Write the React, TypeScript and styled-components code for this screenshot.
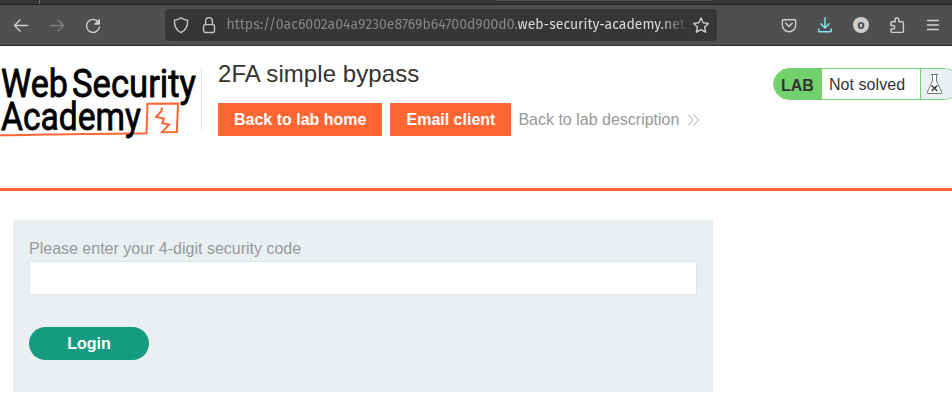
import React from "react";
import styled, { createGlobalStyle } from "styled-components";

const GlobalStyle = createGlobalStyle`
  *, *::before, *::after { box-sizing: border-box; }
  html, body { margin: 0; background: #fff; }
  body { font-family: "Liberation Sans", Arial, sans-serif; overflow: hidden; }
`;

const Page = styled.div`
  width: 952px;
  height: 418px;
  overflow: hidden;
  background: #fff;
  color: #333332;
`;

const TabStrip = styled.div`
  display: flex;
  height: 5px;
  background: #363636;
  border-bottom: 1px solid #232323;
`;

const TabDivider = styled.div`
  width: 1px;
  height: 4px;
  margin-left: 39px;
  background: #6a6a6a;
`;

const TabEdge = styled.div`
  width: 217px;
  height: 1px;
  margin-left: 456px;
  background: #505050;
`;

const Toolbar = styled.div`
  display: flex;
  align-items: center;
  height: 41px;
  padding-left: 9px;
  background: #4f4f4f;
  border-bottom: 1px solid #2b2b2b;
`;

const IconButton = styled.button<{ $color?: string; $gap?: number }>`
  display: flex;
  flex: none;
  width: 24px;
  height: 24px;
  padding: 0;
  border: 0;
  margin: 0 ${(p) => p.$gap ?? 12}px 0 0;
  background: none;
  color: ${(p) => p.$color ?? "#cfcfcf"};
`;

const Glyph = styled.svg`
  display: block;
  width: 24px;
  height: 24px;
  fill: none;
  stroke: currentColor;
  stroke-width: 1.4;
  stroke-linecap: round;
  stroke-linejoin: round;
`;

const AddressBar = styled.div`
  display: flex;
  align-items: center;
  flex: none;
  width: 552px;
  height: 32px;
  margin: 0 60px 0 48px;
  padding-left: 4px;
  border-radius: 4px;
  background: #363636;
`;

const Url = styled.div`
  flex: none;
  width: 462px;
  margin-left: 5.5px;
  margin-right: 0.5px;
  white-space: nowrap;
  font: 14px/22px "Fira Sans", "Noto Sans", sans-serif;
  color: #868686;
  mask-image: linear-gradient(to right, #000 432px, transparent 462px);
`;

const Domain = styled.span`
  color: #dadada;
`;

const Header = styled.header`
  display: flex;
  height: 145px;
  padding-top: 10px;
  border-bottom: 3px solid #ff6633;
`;

const Logo = styled.svg`
  display: block;
  flex: none;
  width: 201px;
  height: 90px;
  overflow: visible;
`;

const HeaderBody = styled.div`
  height: 62px;
  margin-top: 12px;
  padding-left: 16px;
  border-left: 1px solid #e2e4e5;
`;

const Title = styled.h2`
  margin: -10px 0 14px;
  font-size: 24px;
  line-height: 31px;
  font-weight: 400;
  letter-spacing: 0.07px;
`;

const Actions = styled.div`
  display: flex;
  align-items: center;
  gap: 8px;
`;

const OrangeButton = styled.a`
  height: 33px;
  padding: 0 16px;
  background: #ff6633;
  color: #fff;
  font-size: 16px;
  line-height: 33px;
  font-weight: 700;
  white-space: nowrap;
`;

const DescriptionLink = styled.a`
  display: flex;
  align-items: center;
  gap: 8px;
  margin-left: -1px;
  color: #999;
  font-size: 16px;
  line-height: 33px;
  white-space: nowrap;
`;

const Chevrons = styled.svg`
  width: 14px;
  height: 14px;
  fill: none;
  stroke: #999;
  stroke-width: 0.9;
`;

const Status = styled.div`
  display: flex;
  flex: none;
  width: 187px;
  height: 32px;
  margin: 12px -8px 0 auto;
  border: 1px solid #70d16d;
  border-radius: 16px;
  overflow: hidden;
  font-size: 16px;
  line-height: 32px;
`;

const LabTag = styled.span`
  width: 48px;
  padding-left: 7px;
  background: #70d16d;
  font-weight: 700;
  line-height: 34px;
`;

const StatusText = styled.span`
  width: 98px;
  padding-left: 7px;
  letter-spacing: 0.05px;
  white-space: nowrap;
`;

const FlaskCell = styled.span`
  flex: 1;
  padding: 3px 0 0 4px;
  border-left: 1px solid #70d16d;
  background: #eaeff2;
`;

const Flask = styled.svg`
  display: block;
  width: 20px;
  height: 24px;
  fill: none;
`;

const LoginForm = styled.form`
  width: 700px;
  height: 172px;
  margin: 29px 0 0 13px;
  padding: 18px 16px 0;
  background: #eaeff2;
`;

const Label = styled.label`
  display: block;
  height: 23px;
  color: #999;
  font-size: 16px;
  line-height: 21px;
`;

const CodeInput = styled.input`
  display: block;
  width: 668px;
  height: 34px;
  border: 1px solid #e1e3e4;
  border-radius: 0;
  background: #fff;
  outline: 0;
`;

const LoginButton = styled.button`
  display: block;
  width: 120px;
  height: 33px;
  margin-top: 32px;
  padding: 0;
  border: 0;
  border-radius: 17px;
  background: #159b80;
  color: #fff;
  font: 700 16px/33px "Liberation Sans", Arial, sans-serif;
`;

const BadgeText = styled.text`
  font: 700 12px "Noto Sans", sans-serif;
  fill: #4a4a4a;
  stroke: none;
`;

const LogoText = styled.text`
  font: 400 38.5px Roboto, sans-serif;
  fill: #000;
  stroke: #000;
  stroke-width: 0.8;
`;

export default function App() {
  return (
    <Page>
      <GlobalStyle />
      <TabStrip>
        <TabDivider />
        <TabEdge />
      </TabStrip>
      <Toolbar>
        <IconButton aria-label="Back">
          <Glyph viewBox="0 0 24 24"><path d="M18.500 12.500H5.600M11 7l-5.500 5.500L11 18" /></Glyph>
        </IconButton>
        <IconButton aria-label="Forward" $color="#7f7f7f">
          <Glyph viewBox="0 0 24 24"><path d="M5.500 12.500h12.900M13 7l5.500 5.500L13 18" /></Glyph>
        </IconButton>
        <IconButton aria-label="Reload">
          <Glyph viewBox="0 0 24 24">
            <path d="M17 8.600A6.500 6.500 0 1 0 18.500 14" />
            <path d="M18.500 6.500v4.700h-4.700z" fill="currentColor" strokeWidth="1" />
          </Glyph>
        </IconButton>
        <AddressBar>
          <IconButton aria-label="Tracking protection" $gap={4} $color="#c4c4c4">
            <Glyph viewBox="0 0 24 24">
              <path d="M12 4.700c1.800 1.500 4 2.300 6.600 2.600.2 5.600-1.600 10-6.600 12.400C7 17.300 5.200 12.900 5.400 7.300 8 7 10.200 6.200 12 4.700z" />
            </Glyph>
          </IconButton>
          <IconButton aria-label="Secure connection" $gap={0} $color="#c4c4c4">
            <Glyph viewBox="0 0 24 24">
              <rect x="6.600" y="11.600" width="10.900" height="7.900" rx="1.500" />
              <path d="M8.600 11.500V8a3.400 3.400 0 0 1 6.800 0v3.500" />
            </Glyph>
          </IconButton>
          <Url>https://0ac6002a04a9230e8769b64700d900d0.<Domain>web-security-academy.net</Domain></Url>
          <IconButton aria-label="Bookmark" $gap={0}>
            <Glyph viewBox="0 0 24 24">
              <path d="M12 5l2.200 4.800 5.200.6-3.800 3.600 1 5.200L12 16.600l-4.600 2.600 1-5.200-3.800-3.600 5.200-.6z" />
            </Glyph>
          </IconButton>
        </AddressBar>
        <IconButton aria-label="Pocket">
          <Glyph viewBox="0 0 24 24">
            <path d="M6.700 6.700h10.600a1.400 1.400 0 0 1 1.400 1.400V12a6.700 6.700 0 0 1-13.400 0V8.100a1.400 1.400 0 0 1 1.400-1.400z" />
            <path d="M8.800 10.300l3.200 3.200 3.200-3.200" />
          </Glyph>
        </IconButton>
        <IconButton aria-label="Downloads" $color="#80ebf4">
          <Glyph viewBox="0 0 24 24">
            <path d="M12 4.800v10M7.800 10.700l4.200 4.200 4.200-4.200M5.700 16v1.800a1 1 0 0 0 1 1h10.600a1 1 0 0 0 1-1V16" />
          </Glyph>
        </IconButton>
        <IconButton aria-label="Container">
          <Glyph viewBox="0 0 24 24">
            <circle cx="12" cy="12" r="8" fill="currentColor" stroke="none" />
            <BadgeText x="12" y="15.700" textAnchor="middle">o</BadgeText>
          </Glyph>
        </IconButton>
        <IconButton aria-label="Extensions">
          <Glyph viewBox="0 0 24 24">
            <path d="M7.200 8.800h3V6.600a1.800 1.800 0 0 1 3.600 0v2.200h3.400a1.200 1.200 0 0 1 1.200 1.200v8.200a1.200 1.200 0 0 1-1.200 1.200H7.200A1.200 1.200 0 0 1 6 18.200V16h2a1.700 1.700 0 0 0 0-3.500H6V10a1.200 1.200 0 0 1 1.200-1.200z" />
          </Glyph>
        </IconButton>
        <IconButton aria-label="Menu" $gap={0}>
          <Glyph viewBox="0 0 24 24"><path d="M6.500 7.500h11M6.500 12h11M6.500 16.500h11" strokeWidth="1.300" /></Glyph>
        </IconButton>
      </Toolbar>

      <Header>
        <Logo viewBox="0 56 201 90" aria-label="Web Security Academy">
          <LogoText x="1" y="97" textLength="67" lengthAdjust="spacingAndGlyphs">Web</LogoText>
          <LogoText x="72" y="97" textLength="124" lengthAdjust="spacingAndGlyphs">Security</LogoText>
          <path
            d="M0 135.200C28 135.600 55 134 84 133.900C105 134.100 126 133.500 146.500 133.300L147.500 103.800L178 103.500L176.800 132L162 132.200L169 124.500L162.200 123L164 118.800L156 117L161.500 111L162 107.500"
            fill="none"
            stroke="#ff6633"
            strokeWidth="2"
          />
          <LogoText x="1" y="129.500" textLength="140" lengthAdjust="spacingAndGlyphs">Academy</LogoText>
        </Logo>
        <HeaderBody>
          <Title>2FA simple bypass</Title>
          <Actions>
            <OrangeButton>Back to lab home</OrangeButton>
            <OrangeButton>Email client</OrangeButton>
            <DescriptionLink>
              Back to lab description
              <Chevrons viewBox="0 0 14 14"><path d="M1 1.500l5 5.500-5 5.500M6.500 1.500l5 5.500-5 5.500" /></Chevrons>
            </DescriptionLink>
          </Actions>
        </HeaderBody>
        <Status>
          <LabTag>LAB</LabTag>
          <StatusText>Not solved</StatusText>
          <FlaskCell>
            <Flask viewBox="0 0 20 24">
              <path d="M6 2.500h7M7.500 2.500v6.500L2.300 20.200q-.5 1.300.7 1.300h13q1.200 0 .7-1.300L11.500 9V2.500" fill="#fff" stroke="#777" strokeWidth="1" />
              <path d="M6.700 13.500l5.600 5.600M12.300 13.500l-5.600 5.600" stroke="#333" strokeWidth="1.400" />
            </Flask>
          </FlaskCell>
        </Status>
      </Header>

      <LoginForm onSubmit={(e) => e.preventDefault()}>
        <Label htmlFor="code">Please enter your 4-digit security code</Label>
        <CodeInput id="code" />
        <LoginButton type="submit">Login</LoginButton>
      </LoginForm>
    </Page>
  );
}
